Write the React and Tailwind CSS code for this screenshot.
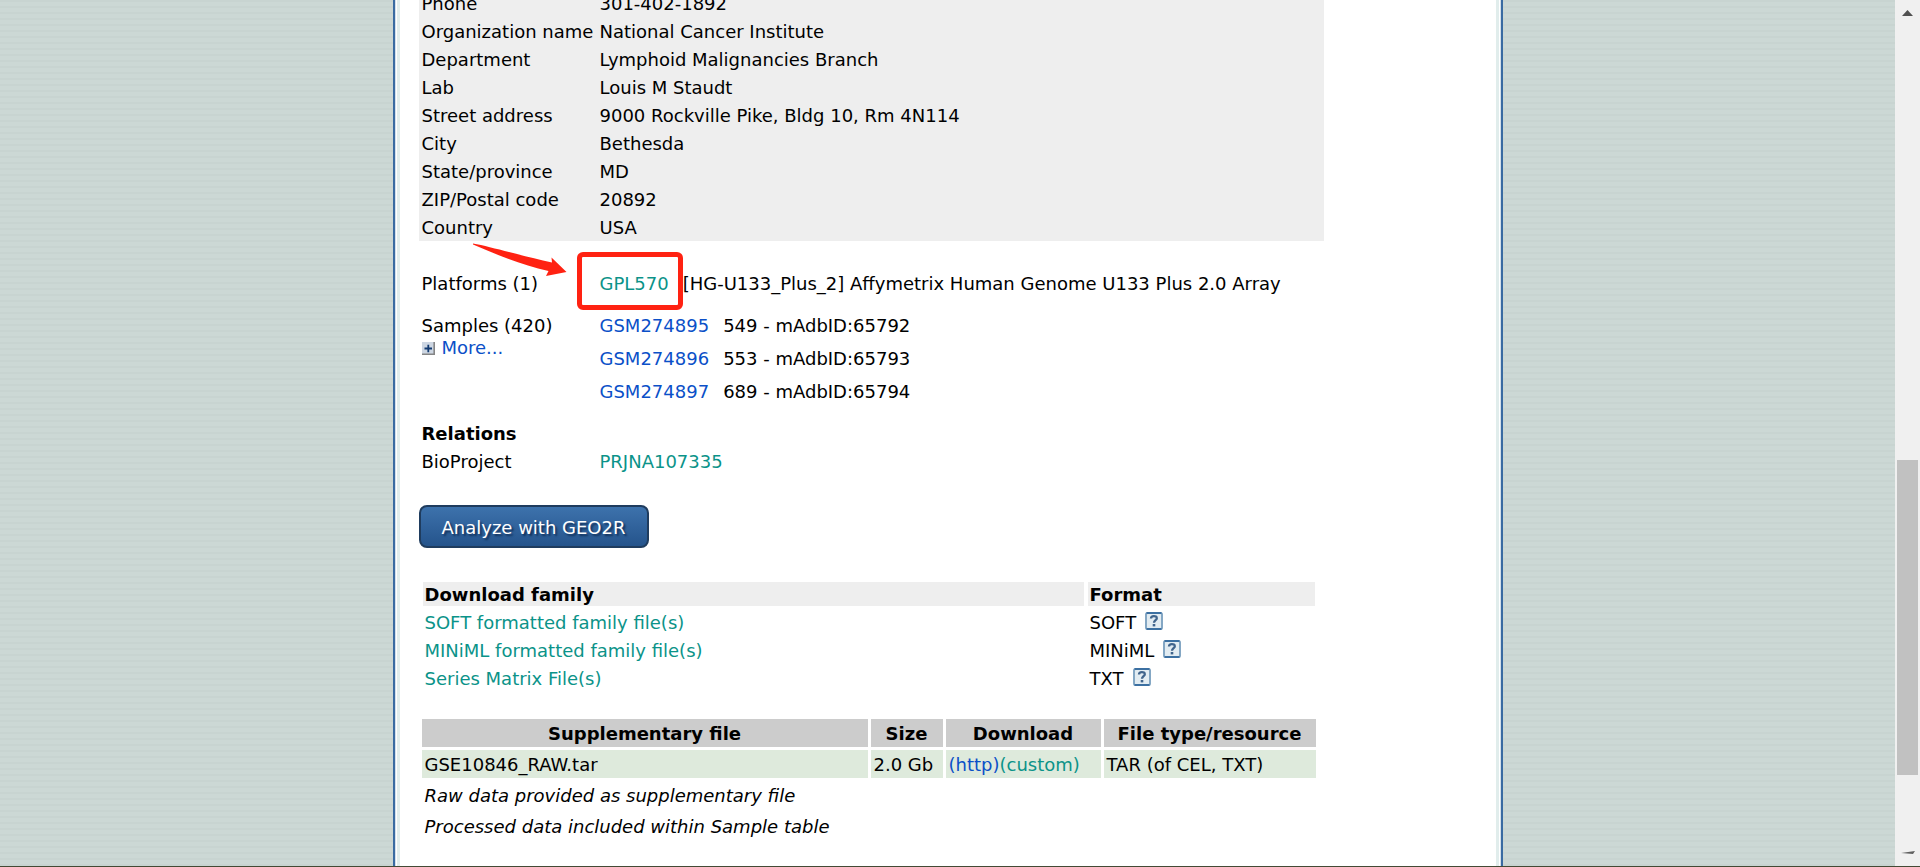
import React from "react";

const contact = [
  ["Phone", "301-402-1892"],
  ["Organization name", "National Cancer Institute"],
  ["Department", "Lymphoid Malignancies Branch"],
  ["Lab", "Louis M Staudt"],
  ["Street address", "9000 Rockville Pike, Bldg 10, Rm 4N114"],
  ["City", "Bethesda"],
  ["State/province", "MD"],
  ["ZIP/Postal code", "20892"],
  ["Country", "USA"],
];

const samples = [
  ["GSM274895", "549 - mAdbID:65792"],
  ["GSM274896", "553 - mAdbID:65793"],
  ["GSM274897", "689 - mAdbID:65794"],
];

const families = [
  ["SOFT formatted family file(s)", "SOFT"],
  ["MINiML formatted family file(s)", "MINiML"],
  ["Series Matrix File(s)", "TXT"],
];

function Link({ visited, children }) {
  return (
    <a href="#" className={visited ? "text-[#0b9389]" : "text-[#0b50c8]"}>
      {children}
    </a>
  );
}

function HelpIcon() {
  return (
    <svg width="18" height="18" viewBox="0 0 18 18" aria-hidden="true">
      <rect x="1" y="1" width="16" height="16" rx="1.5" fill="#e2ecf2" stroke="#84a7c4" strokeWidth="2" />
      <path d="M1.5 1H16.5M1.5 17H16.5" stroke="#3c70a2" strokeWidth="1.8" />
      <path d="M6 6.4C6 3.4 11.8 3.3 11.8 6.2C11.8 8.2 9 8.2 9 10.8" fill="none" stroke="#40648c" strokeWidth="2.3" />
      <rect x="7.7" y="12" width="2.6" height="2.4" fill="#40648c" />
    </svg>
  );
}

function ExpandIcon() {
  return (
    <svg width="13" height="13" viewBox="0 0 13 13" aria-hidden="true">
      <rect width="13" height="13" fill="#cdd6e2" />
      <path d="M0 12.2H12.2V0" fill="none" stroke="#858585" strokeWidth="1.6" />
      <path d="M2.5 6.5H10M6.3 2.8V10.2" stroke="#123a70" strokeWidth="1.8" />
    </svg>
  );
}

function Arrow() {
  return (
    <svg className="absolute -top-[30px] left-[50px]" width="96" height="36" viewBox="0 0 96 36" aria-hidden="true">
      <path d="M1 0.5C20 4 50 13 80 19.500L79.500 14.500L94.500 29L74 33L76.500 28C50 22 25 12 1 1.500Z" fill="#ff2212" />
    </svg>
  );
}

function Scrollbar() {
  return (
    <div className="flex w-[25px] shrink-0 flex-col items-center bg-[#f0f0f0]" aria-hidden="true">
      <svg className="mt-2.5" width="11" height="6" viewBox="0 0 11 6">
        <path d="M5.5 0L11 6H0Z" fill="#505050" />
      </svg>
      <div className="flex-[443]" />
      <div className="w-[21px] flex-[315] bg-[#c1c1c1]" />
      <div className="flex-[76]" />
      <svg className="mb-3" width="14" height="4" viewBox="0 0 14 4">
        <path d="M0 2L14 0L12 3Z" fill="#606060" />
      </svg>
    </div>
  );
}

export default function App() {
  return (
    <div className="relative flex h-screen overflow-hidden bg-white font-['Verdana','DejaVu_Sans',sans-serif] text-[18px] leading-[22px] text-black">
      <div className="flex min-w-0 flex-1 justify-center bg-[repeating-linear-gradient(to_bottom,#c8d4d1_0px,#c8d4d1_2px,#ccd8d5_2px,#ccd8d5_6px)]">
        <main className="w-full max-w-[1110px] border-x-2 border-[#3a6ba2] bg-white">
          <div className="flow-root h-full border-x border-[#d3dfea]">
            <div className="mx-px flow-root h-full border-x-[3px] border-[#e1edec] pl-[19px] pr-[172px]">
              <table className="-mt-[11px] w-full table-fixed border-collapse bg-[#eeeeee]">
                <tbody>
                  {contact.map(([label, value]) => (
                    <tr key={label} className="h-7">
                      <th scope="row" className="w-[178px] whitespace-nowrap p-0 pl-[3px] pt-0.5 text-left font-normal">{label}</th>
                      <td className="p-0 pl-[3px] pt-0.5">{value}</td>
                    </tr>
                  ))}
                </tbody>
              </table>

              <dl className="mt-8 grid grid-cols-[178px_1fr] pl-[3px]">
                <dt className="relative">
                  Platforms (1)
                  <Arrow />
                </dt>
                <dd className="relative whitespace-nowrap">
                  <div className="absolute -left-[23px] -top-[21px] h-[58px] w-[106px] rounded-md border-5 border-[#ff2212]" />
                  <div className="flex gap-3.5">
                    <Link visited>GPL570</Link>
                    <span>[HG-U133_Plus_2] Affymetrix Human Genome U133 Plus 2.0 Array</span>
                  </div>
                </dd>
                <dt className="mt-5">
                  Samples (420)
                  <a href="#" className="flex items-center gap-[7px] text-[#0b50c8]">
                    <ExpandIcon />
                    More...
                  </a>
                </dt>
                <dd className="mt-5 flex flex-col gap-[11px]">
                  {samples.map(([id, title]) => (
                    <div key={id} className="flex gap-3.5">
                      <Link>{id}</Link>
                      <span>{title}</span>
                    </div>
                  ))}
                </dd>
              </dl>

              <h2 className="mt-5 pl-[3px] font-bold">Relations</h2>
              <dl className="mt-1.5 grid grid-cols-[178px_1fr] pl-[3px]">
                <dt>BioProject</dt>
                <dd><Link visited>PRJNA107335</Link></dd>
              </dl>

              <button type="button" className="mt-8 block h-[43px] w-[230px] rounded-lg border-2 border-[#1f3c5e] bg-linear-to-b from-[#3d72ac] to-[#25548c] pt-0.5 text-white [text-shadow:2px_2px_2px_#10305a]">
                Analyze with GEO2R
              </button>

              <table className="mt-[34px] w-[900px] table-fixed border-separate border-spacing-x-1 border-spacing-y-0">
                <thead>
                  <tr className="h-6 text-left">
                    <th className="w-[661px] bg-[#eeeeee] p-0 pl-0.5 pt-0.5">Download family</th>
                    <th className="bg-[#eeeeee] p-0 pl-0.5 pt-0.5">Format</th>
                  </tr>
                </thead>
                <tbody>
                  {families.map(([name, format]) => (
                    <tr key={format} className="h-7">
                      <td className="p-0 pl-0.5 pt-1.5"><Link visited>{name}</Link></td>
                      <td className="p-0 pl-0.5 pt-1.5">
                        <div className="flex gap-[9px]">
                          {format}
                          <a href="#" aria-label={"About " + format}><HelpIcon /></a>
                        </div>
                      </td>
                    </tr>
                  ))}
                </tbody>
              </table>

              <table className="mt-[26px] w-[900px] table-fixed border-separate border-spacing-[3px]">
                <thead>
                  <tr className="h-7 bg-[#cccccc]">
                    <th className="w-[446px] p-0 pt-0.5">Supplementary file</th>
                    <th className="w-[72px] p-0 pt-0.5">Size</th>
                    <th className="w-[155px] p-0 pt-0.5">Download</th>
                    <th className="p-0 pt-0.5">File type/resource</th>
                  </tr>
                </thead>
                <tbody>
                  <tr className="h-7 whitespace-nowrap bg-[#deeadc]">
                    <td className="p-0 pl-[3px] pt-0.5">GSE10846_RAW.tar</td>
                    <td className="p-0 pl-[3px] pt-0.5">2.0 Gb</td>
                    <td className="p-0 pl-[3px] pt-0.5"><Link>(http)</Link><Link visited>(custom)</Link></td>
                    <td className="p-0 pl-[3px] pt-0.5">TAR (of CEL, TXT)</td>
                  </tr>
                  <tr className="h-7 italic">
                    <td colSpan={4} className="p-0 pl-[3px] pt-0.5">Raw data provided as supplementary file</td>
                  </tr>
                  <tr className="h-7 italic">
                    <td colSpan={4} className="p-0 pl-[3px] pt-0.5">Processed data included within Sample table</td>
                  </tr>
                </tbody>
              </table>
            </div>
          </div>
        </main>
      </div>
      <Scrollbar />
      <div className="absolute inset-x-0 bottom-0 h-px bg-[#434a35]" />
    </div>
  );
}
